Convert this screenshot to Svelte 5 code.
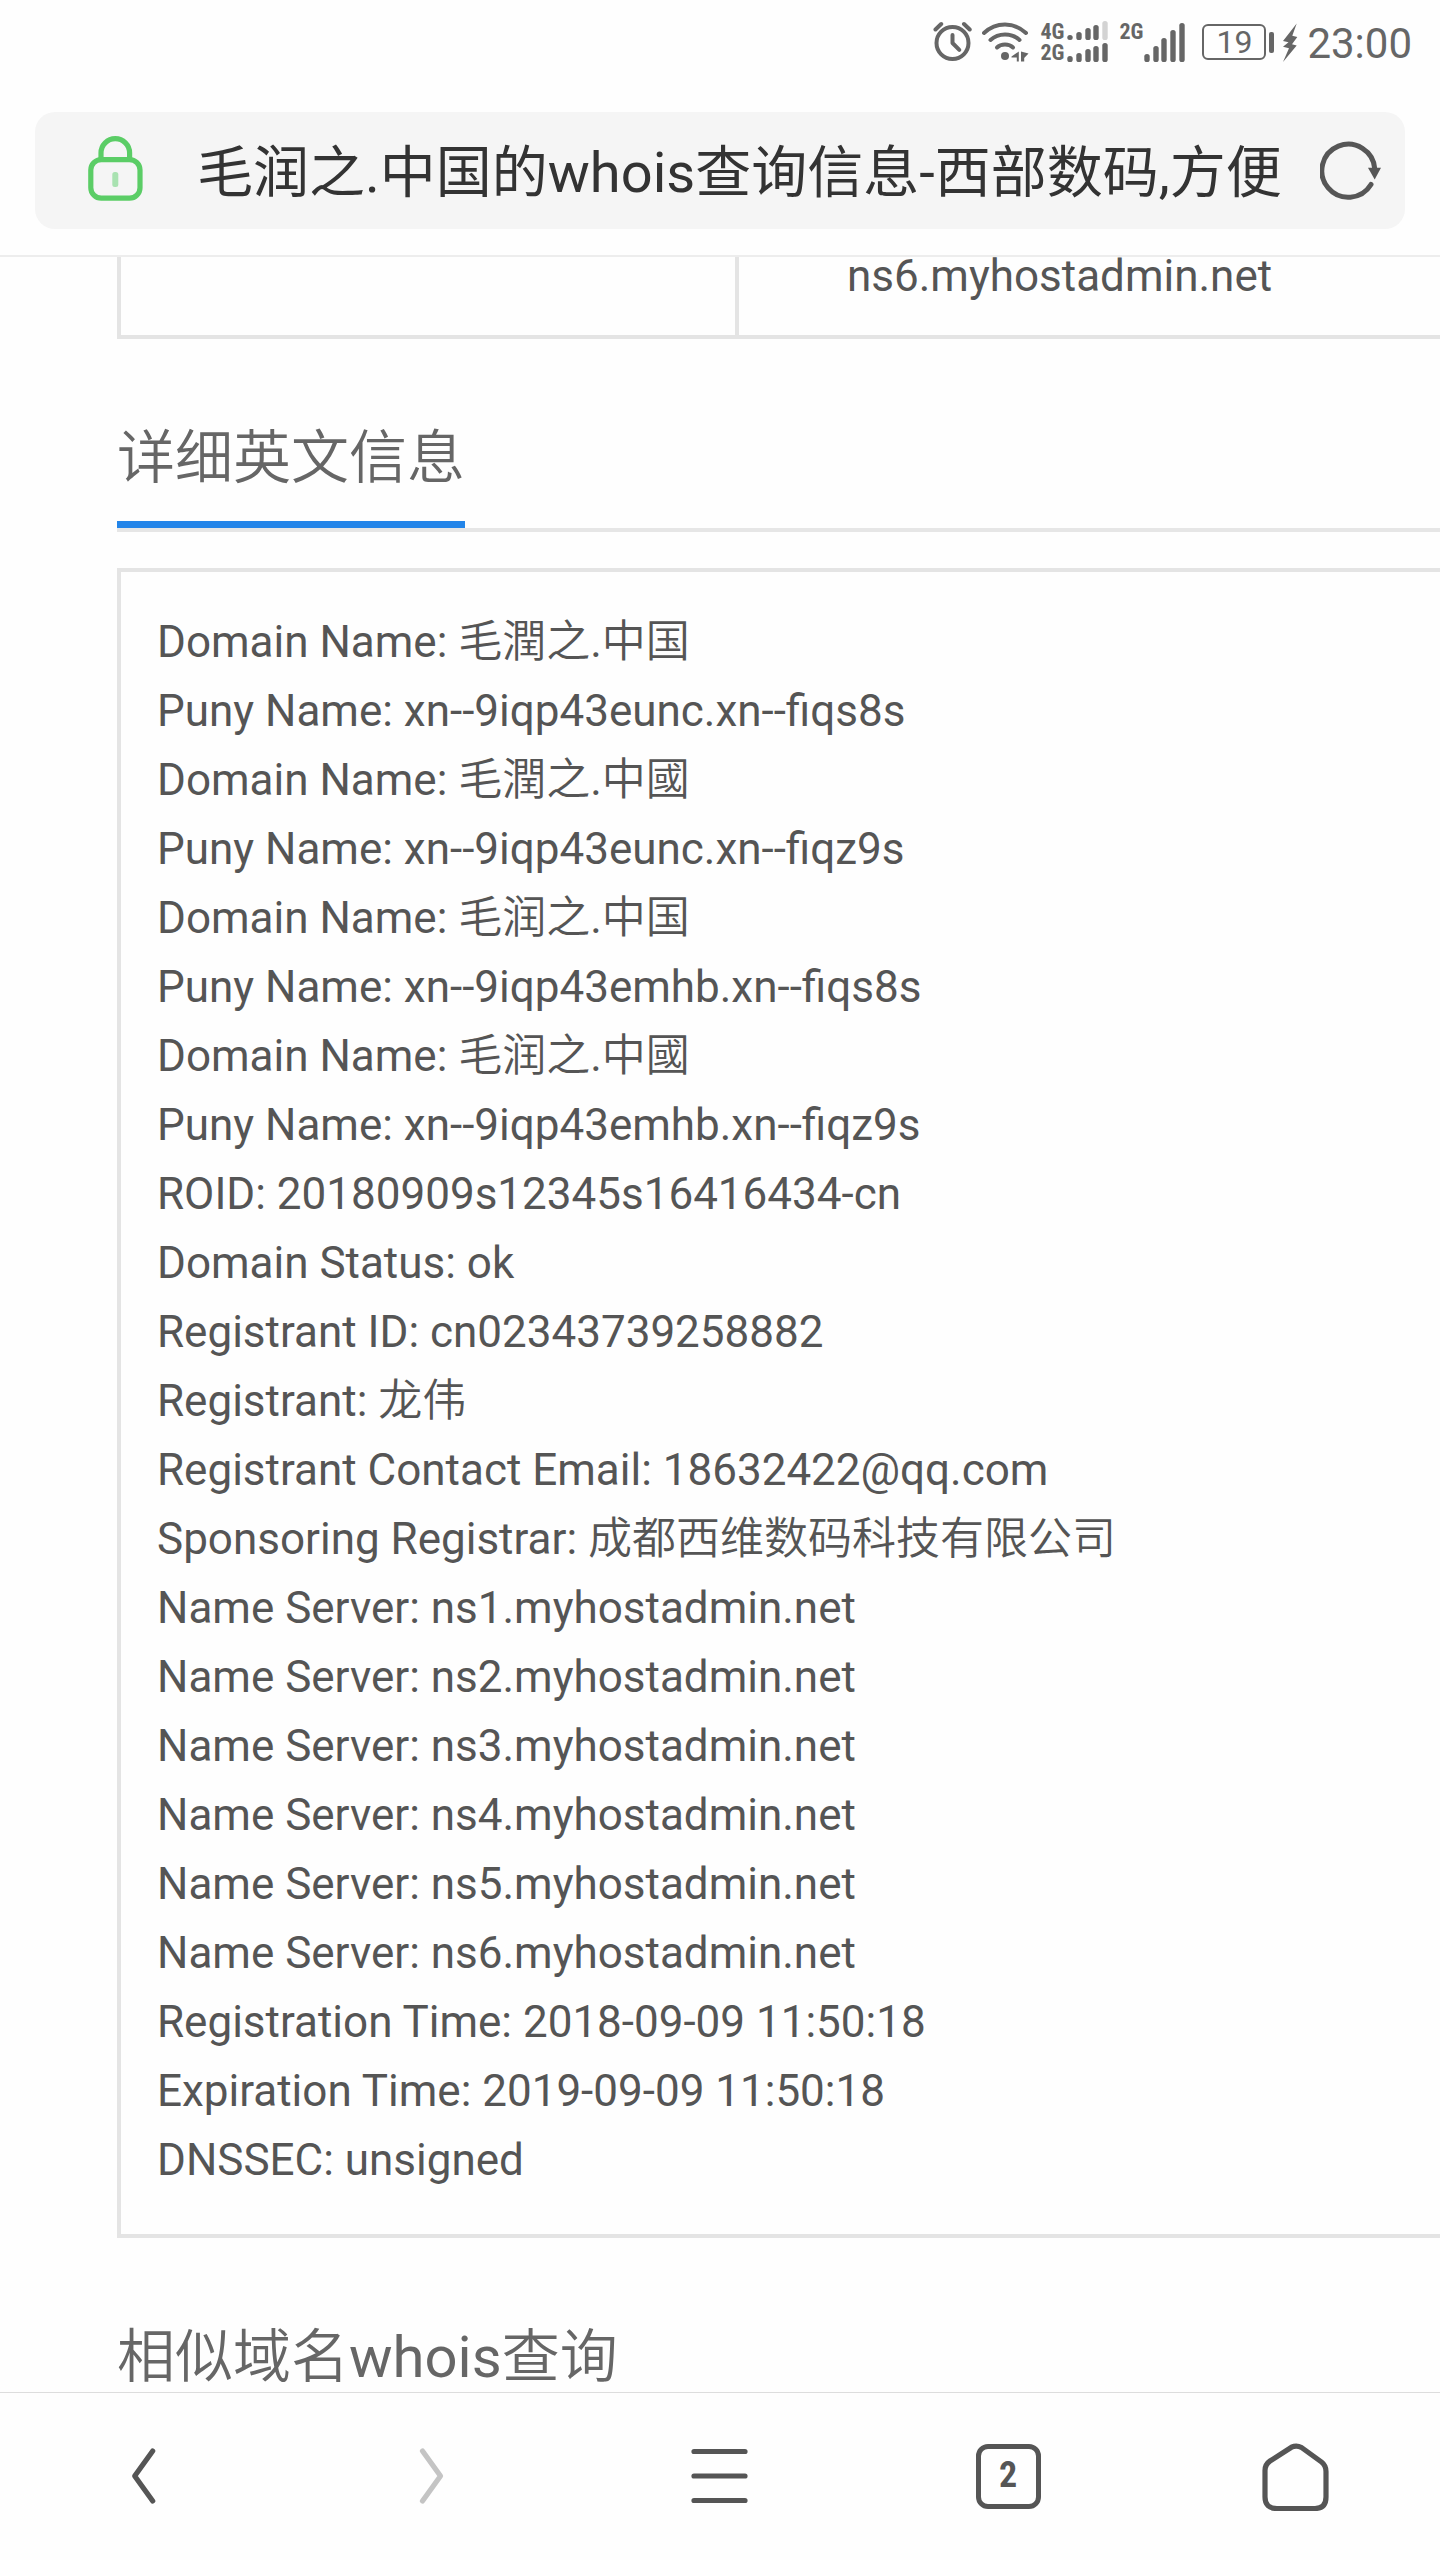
<script lang="ts">
  type Bar = { x: number; top: number; base: number; faint?: boolean };

  const pageTitle = '毛润之.中国的whois查询信息-西部数码,方便';

  const record = [
    'Domain Name: 毛潤之.中国',
    'Puny Name: xn--9iqp43eunc.xn--fiqs8s',
    'Domain Name: 毛潤之.中國',
    'Puny Name: xn--9iqp43eunc.xn--fiqz9s',
    'Domain Name: 毛润之.中国',
    'Puny Name: xn--9iqp43emhb.xn--fiqs8s',
    'Domain Name: 毛润之.中國',
    'Puny Name: xn--9iqp43emhb.xn--fiqz9s',
    'ROID: 20180909s12345s16416434-cn',
    'Domain Status: ok',
    'Registrant ID: cn02343739258882',
    'Registrant: 龙伟',
    'Registrant Contact Email: 18632422@qq.com',
    'Sponsoring Registrar: 成都西维数码科技有限公司',
    'Name Server: ns1.myhostadmin.net',
    'Name Server: ns2.myhostadmin.net',
    'Name Server: ns3.myhostadmin.net',
    'Name Server: ns4.myhostadmin.net',
    'Name Server: ns5.myhostadmin.net',
    'Name Server: ns6.myhostadmin.net',
    'Registration Time: 2018-09-09 11:50:18',
    'Expiration Time: 2019-09-09 11:50:18',
    'DNSSEC: unsigned',
  ];

  const dualBars: Bar[] = [
    { x: 3, top: 14, base: 19 },
    { x: 12, top: 11, base: 19 },
    { x: 21, top: 7, base: 19 },
    { x: 29, top: 4, base: 19 },
    { x: 38, top: 0, base: 19, faint: true },
    { x: 3, top: 35, base: 41 },
    { x: 12, top: 32, base: 41 },
    { x: 21, top: 28, base: 41 },
    { x: 29, top: 25, base: 41 },
    { x: 38, top: 22, base: 41 },
  ];

  const singleBars: Bar[] = [
    { x: 3, top: 33, base: 41 },
    { x: 12, top: 25, base: 41 },
    { x: 20, top: 17, base: 41 },
    { x: 29, top: 9, base: 41 },
    { x: 38, top: 2, base: 41 },
  ];

  let tabCount = $state(2);
</script>

{#snippet signal(bars: Bar[])}
  <svg width="42" height="42" viewBox="0 0 42 42" aria-hidden="true">
    {#each bars as bar}
      <rect
        class:faint={bar.faint}
        x={bar.x - 2.7}
        y={bar.top}
        width="5.4"
        height={bar.base - bar.top}
        rx="2.6"
        fill="currentColor"
      />
    {/each}
  </svg>
{/snippet}

<div class="browser">
  <div class="status">
    <svg width="40" height="42" viewBox="0 0 40 42" fill="none" stroke="currentColor" stroke-width="4" stroke-linecap="round" aria-hidden="true">
      <circle cx="19.5" cy="22" r="16" />
      <path d="M19.5 14v8l6.8 6.8" stroke-linejoin="round" />
      <path d="M2.500 8.500 8.200 3M31 3l5.700 5.500" />
    </svg>
    <svg class="wifi" width="48" height="42" viewBox="0 0 48 42" fill="none" stroke="currentColor" stroke-width="4" stroke-linecap="round" aria-hidden="true">
      <path d="M2 12Q11 3.500 23 3.500t21 8.500" />
      <path d="M8.500 19Q14.500 13.500 23 13.500t14.500 5.500" />
      <path d="M15 26.500Q18 23.500 23 23.500t8 3" />
      <circle cx="23" cy="35" r="4" fill="currentColor" stroke="none" />
      <path d="M29.500 35.500 36.800 30.500v10h-2v-4h-5.300zM39 40.500v-10l7.500 2-4.300 4.500v3.500z" fill="currentColor" stroke="none" />
    </svg>
    <div class="net dual">
      <span>4G</span>
      <span>2G</span>
    </div>
    {@render signal(dualBars)}
    <div class="net single"><span>2G</span></div>
    {@render signal(singleBars)}
    <div class="battery">19</div>
    <div class="nub"></div>
    <svg width="16" height="42" viewBox="0 0 16 42" aria-hidden="true">
      <path d="M14.700 2.500 1 20l5.500 1.200L1 25.800l6 1.500L1 41 14.700 24.500 10 23.300 15.300 16l-5-1.300z" fill="currentColor" />
    </svg>
    <time>23:00</time>
  </div>

  <header>
    <div class="address">
      <svg width="56" height="70" viewBox="0 0 56 70" fill="none" stroke="#5bcd66" stroke-width="5.200" aria-hidden="true">
        <rect x="2.800" y="23.600" width="49.200" height="38.600" rx="10.500" />
        <path d="M13 23.500v-6.500a14.300 14.300 0 0 1 28.600 0v6.500" />
        <rect x="24.300" y="36" width="6" height="15" rx="2.500" fill="#a9e2b1" stroke="none" />
      </svg>
      <input type="text" aria-label="地址栏" value={pageTitle} readonly />
      <button aria-label="刷新">
        <svg width="64" height="60" viewBox="1 1 64 60" fill="none" stroke="#565656" stroke-width="5" aria-hidden="true">
          <path d="M52 44.500A26.500 26.500 0 1 1 55.800 29" stroke-linecap="round" />
          <path d="M49 27.700h13L55.700 39.500z" fill="#565656" stroke="none" />
        </svg>
      </button>
    </div>
  </header>

  <main>
    <table>
      <tbody>
        <tr>
          <th scope="row" aria-label="DNS"></th>
          <td>ns6.myhostadmin.net</td>
        </tr>
      </tbody>
    </table>

    <h2><span>详细英文信息</span></h2>
    <div class="record">
      {#each record as line}
        <p>{line}</p>
      {/each}
    </div>

    <h2><span>相似域名whois查询</span></h2>
  </main>

  <nav>
    <button aria-label="后退">
      <svg width="68" height="68" viewBox="0 0 68 68" aria-hidden="true">
        <path d="M42.700 8 24.700 33l18 25" />
      </svg>
    </button>
    <button aria-label="前进" disabled>
      <svg width="68" height="68" viewBox="0 0 68 68" aria-hidden="true">
        <path d="M24.500 8l18 25-18 25" />
      </svg>
    </button>
    <button aria-label="菜单">
      <svg width="68" height="68" viewBox="0 0 68 68" aria-hidden="true">
        <path d="M8 8.500h51M8 33h51M8 57.500h51" />
      </svg>
    </button>
    <button aria-label="标签页">
      <span class="tabs">{tabCount}</span>
    </button>
    <button aria-label="主页">
      <svg width="68" height="68" viewBox="0 0 68 68" aria-hidden="true">
        <path d="M3 27.500Q3 21.500 8 18L29.500 4.200Q34.500 1.800 39.500 4.500L59.500 19Q64 22.500 64 28.500V54Q64 65.500 53 65.500H15Q3 65.500 3 54Z" />
      </svg>
    </button>
  </nav>
</div>

<style>
  :global(body) {
    background: #fefefe;
  }
  .browser {
    display: flex;
    flex-direction: column;
    height: 100vh;
    overflow: hidden;
    font-family: Roboto, "Noto Sans CJK SC", sans-serif;
    color: #555;
  }
  button {
    padding: 0;
    border: none;
    background: none;
    color: inherit;
  }
  svg {
    display: block;
    flex: none;
  }

  .status {
    display: flex;
    align-items: center;
    justify-content: flex-end;
    height: 84px;
    padding-right: 28px;
    color: #666;
  }
  .wifi { margin: 0 10px 0 9px; }
  .faint { fill: #d3d3d3; }
  .net {
    width: 25px;
    height: 42px;
    font-family: "Roboto Condensed", Roboto, sans-serif;
    font-size: 22px;
    font-weight: 700;
    line-height: 21px;
  }
  .net span { display: block; }
  .dual { margin-right: 2px; }
  .single { margin-left: 10px; }
  .battery {
    box-sizing: border-box;
    width: 64px;
    height: 36px;
    margin-left: 16px;
    border: 2px solid;
    border-radius: 6px;
    font-size: 32px;
    line-height: 33px;
    text-align: center;
  }
  .nub {
    width: 5px;
    height: 21px;
    margin: 0 8px 0 3px;
    border-radius: 2px;
    background: #666;
  }
  time {
    margin-left: 9px;
    padding-top: 3px;
    font-size: 42px;
    line-height: 42px;
  }

  header {
    padding: 28px 35px 26px;
    border-bottom: 2px solid #ededed;
  }
  .address {
    display: flex;
    align-items: center;
    height: 117px;
    padding: 0 21px 0 53px;
    border-radius: 20px;
    background: #f5f5f5;
  }
  .address input {
    flex: 1;
    min-width: 0;
    height: 84px;
    margin: 0 36px 0 53px;
    padding: 5px 0 0;
    border: none;
    outline: none;
    background: none;
    font: 56px/84px Roboto, "Noto Sans CJK SC", sans-serif;
    color: #333;
  }

  main {
    flex: 1;
    min-height: 0;
    padding-left: 117px;
    overflow: hidden;
    font-family: Roboto, "Noto Sans CJK SC DemiLight", "Noto Sans CJK SC", sans-serif;
    font-size: 44px;
    line-height: 69px;
  }
  table {
    width: 100%;
    border-spacing: 0;
  }
  th {
    box-sizing: border-box;
    width: 622px;
    padding: 0;
    border: solid #e4e4e4;
    border-width: 0 4px 4px;
  }
  td {
    padding: 0 0 40px 108px;
    border-bottom: 4px solid #e4e4e4;
    line-height: 38px;
  }
  h2 {
    display: flex;
    margin: 57px 0 36px;
    border-bottom: 4px solid #e6e6e6;
    font-size: 58px;
    font-weight: 400;
    line-height: 125px;
    color: #666;
  }
  h2 span { border-bottom: 7px solid #2385e9; }
  .record {
    padding: 36px 36px 39px;
    border: solid #e4e4e4;
    border-width: 4px 0 4px 4px;
  }
  p {
    margin: 0;
    white-space: nowrap;
  }

  nav {
    display: grid;
    grid-template-columns: repeat(5, 1fr);
    height: 167px;
    border-top: 1px solid #ddd;
    background: #fefefe;
  }
  nav button {
    display: grid;
    place-items: center;
    color: #555;
  }
  nav button:disabled { color: #c4c4c4; }
  nav svg {
    fill: none;
    stroke: currentColor;
    stroke-width: 5.2;
    stroke-linecap: round;
    stroke-linejoin: round;
  }
  .tabs {
    box-sizing: border-box;
    width: 65px;
    height: 65px;
    border: 5px solid;
    border-radius: 12px;
    font: 700 36px/53px "Roboto Condensed", Roboto, sans-serif;
  }
</style>
